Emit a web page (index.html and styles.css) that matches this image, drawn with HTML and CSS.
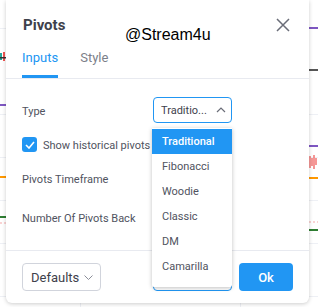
FILE: index.html
```html
<!DOCTYPE html>
<html lang="en">
<head>
  <meta charset="UTF-8">
  <meta name="viewport" content="width=device-width, initial-scale=1.0">
  <link rel="stylesheet" href="styles.css">
</head>
<body>
  <svg class="chart" width="318" height="307" viewBox="0 0 318 307">
    <g stroke="#eef0f5" stroke-width="1">
      <line x1="0" y1="28.5" x2="318" y2="28.5"/>
      <line x1="0" y1="114.5" x2="318" y2="114.5"/>
      <line x1="0" y1="157.5" x2="318" y2="157.5"/>
      <line x1="0" y1="200.5" x2="318" y2="200.5"/>
      <line x1="0" y1="243.5" x2="318" y2="243.5"/>
      <line x1="0" y1="296.5" x2="318" y2="296.5"/>
      <line x1="80.5" y1="0" x2="80.5" y2="307"/>
      <line x1="240.5" y1="0" x2="240.5" y2="307"/>
    </g>
    <rect x="0" y="53" width="2" height="7" fill="#26a69a"/>
    <rect x="3" y="52" width="2" height="9" fill="#ef5350"/>
    <rect x="0" y="57" width="6" height="1.5" fill="#333"/>
    <rect x="0" y="104" width="6" height="2" fill="#7e57c2"/>
    <rect x="0" y="176" width="6" height="2" fill="#ff9800"/>
    <rect x="0" y="216" width="6" height="2" fill="#2e7d32"/>
    <line x1="0" y1="223" x2="6" y2="223" stroke="#f4a7a7" stroke-dasharray="2 2"/>
    <rect x="309" y="27" width="9" height="2" fill="#7e57c2"/>
    <rect x="309" y="69" width="9" height="2" fill="#555"/>
    <rect x="309" y="145" width="9" height="2" fill="#7e57c2"/>
    <path d="M310 156 V168 M312 158 V166 M314 155 V169 M316 158 V165" stroke="#ef5350" stroke-width="1.2"/>
    <rect x="309" y="177" width="9" height="2" fill="#ff9800"/>
    <line x1="309" y1="222" x2="318" y2="222" stroke="#f4a7a7" stroke-dasharray="2 2"/>
    <rect x="309" y="229" width="9" height="2" fill="#2e7d32"/>
  </svg>

  <div class="dialog">
    <div class="dialog-header">
      <span class="dialog-title">Pivots</span>
      <svg class="close-icon" width="14" height="14" viewBox="0 0 14 14">
        <path d="M1 1 L13 13 M13 1 L1 13" stroke="#6a6d78" stroke-width="1.5" fill="none"/>
      </svg>
    </div>

    <div class="tabs">
      <span class="tab active">Inputs</span>
      <span class="tab">Style</span>
    </div>

    <div class="content">
      <div class="row row-type">
        <span class="label">Type</span>
        <div class="select focused">
          <span>Traditio...</span>
          <svg width="10" height="6" viewBox="0 0 10 6"><path d="M1 5 L5 1 L9 5" stroke="#6a6d78" stroke-width="1.2" fill="none"/></svg>
        </div>
      </div>
      <div class="row row-check">
        <span class="checkbox">
          <svg width="10" height="8" viewBox="0 0 10 8"><path d="M1 4 L4 7 L9 1" stroke="#fff" stroke-width="1.6" fill="none"/></svg>
        </span>
        <span class="label">Show historical pivots</span>
      </div>
      <div class="row row-timeframe">
        <span class="label">Pivots Timeframe</span>
      </div>
      <div class="row row-back">
        <span class="label">Number Of Pivots Back</span>
      </div>
    </div>

    <div class="footer">
      <div class="select defaults">
        <span>Defaults</span>
        <svg width="9" height="5" viewBox="0 0 9 5"><path d="M0.5 0.5 L4.5 4.5 L8.5 0.5" stroke="#8a8d98" stroke-width="1" fill="none"/></svg>
      </div>
      <button class="ok-button">Ok</button>
    </div>

    <div class="watermark">@Stream4u</div>

    <div class="peek-box"></div>
    <ul class="dropdown">
      <li class="selected">Traditional</li>
      <li>Fibonacci</li>
      <li>Woodie</li>
      <li>Classic</li>
      <li>DM</li>
      <li>Camarilla</li>
    </ul>
  </div>
</body>
</html>
```

FILE: styles.css
```css
body {
  font-family: Roboto, Arial, sans-serif;
  margin: 0;
  width: 318px;
  height: 307px;
  overflow: hidden;
  position: relative;
  background: #fff;
  color: #434651;
}

.chart {
  position: absolute;
  left: 0;
  top: 0;
}

.dialog {
  position: relative;
  margin-left: 6px;
  width: 303px;
  height: 303px;
  background: #fff;
  border-radius: 0 0 6px 6px;
  box-shadow: 0 1px 4px rgba(0, 0, 0, 0.2);
  display: flex;
  flex-direction: column;
}

.dialog-header {
  display: flex;
  align-items: center;
  justify-content: space-between;
  height: 48px;
  padding: 0 19px 0 17px;
}

.dialog-title {
  font-size: 15px;
  font-weight: 700;
  color: #3e414b;
  margin-top: 1px;
}

.close-icon {
  margin-top: 2px;
}

.tabs {
  display: flex;
  gap: 22px;
  padding: 0 16px;
  border-bottom: 1px solid #e8eaf0;
}

.tab {
  font-size: 13px;
  line-height: 18px;
  padding-bottom: 8px;
  border-bottom: 3px solid transparent;
  color: #7c7f8a;
  margin-top: 1px;
}

.tab.active {
  color: #2196f3;
  border-bottom-color: #2196f3;
}

.content {
  flex: 1;
  padding: 18px 16px 0 16px;
}

.row {
  display: flex;
  align-items: center;
  height: 26px;
  font-size: 11px;
}

.row-check {
  height: 27px;
  margin-top: 8px;
}

.row-timeframe {
  margin-top: 7px;
}

.row-back {
  margin-top: 13px;
}

.label {
  color: #505360;
  padding-top: 2px;
}

.row-type .label {
  width: 131px;
}

.select {
  display: flex;
  align-items: center;
  justify-content: space-between;
  box-sizing: border-box;
  border: 1px solid #d1d4dc;
  border-radius: 4px;
  color: #3e414b;
}

.select.focused {
  width: 79px;
  height: 26px;
  padding: 0 5px 0 7px;
  font-size: 11px;
  border-color: #2196f3;
}

.checkbox {
  width: 15px;
  height: 15px;
  border-radius: 3px;
  background: #2196f3;
  display: flex;
  align-items: center;
  justify-content: center;
  margin-right: 6px;
}

.footer {
  display: flex;
  justify-content: space-between;
  align-items: center;
  padding: 12px 16px;
  border-top: 1px solid #e8eaf0;
}

.defaults {
  width: 79px;
  height: 28px;
  padding: 0 7px 0 8px;
  font-size: 13px;
}

.ok-button {
  width: 54px;
  height: 28px;
  border: none;
  border-radius: 4px;
  background: #2196f3;
  color: #fff;
  font-family: inherit;
  font-size: 13px;
  font-weight: 500;
}

.watermark {
  position: absolute;
  left: 119px;
  top: 26px;
  font-family: "Liberation Sans", Arial, sans-serif;
  font-size: 16px;
  color: #000;
}

.peek-box {
  position: absolute;
  left: 147px;
  top: 262px;
  width: 77px;
  height: 27px;
  border: 1px solid #2196f3;
  border-radius: 4px;
}

.dropdown {
  position: absolute;
  left: 146px;
  top: 128px;
  width: 80px;
  margin: 0;
  padding: 1px 0 8px;
  list-style: none;
  background: #fff;
  box-shadow: 0 1px 4px rgba(0, 0, 0, 0.25);
  border-radius: 0 0 2px 2px;
}

.dropdown li {
  height: 25px;
  line-height: 26px;
  padding-left: 10px;
  font-size: 11px;
  color: #505360;
}

.dropdown li.selected {
  background: #2196f3;
  color: #fff;
  font-weight: 500;
}
```
